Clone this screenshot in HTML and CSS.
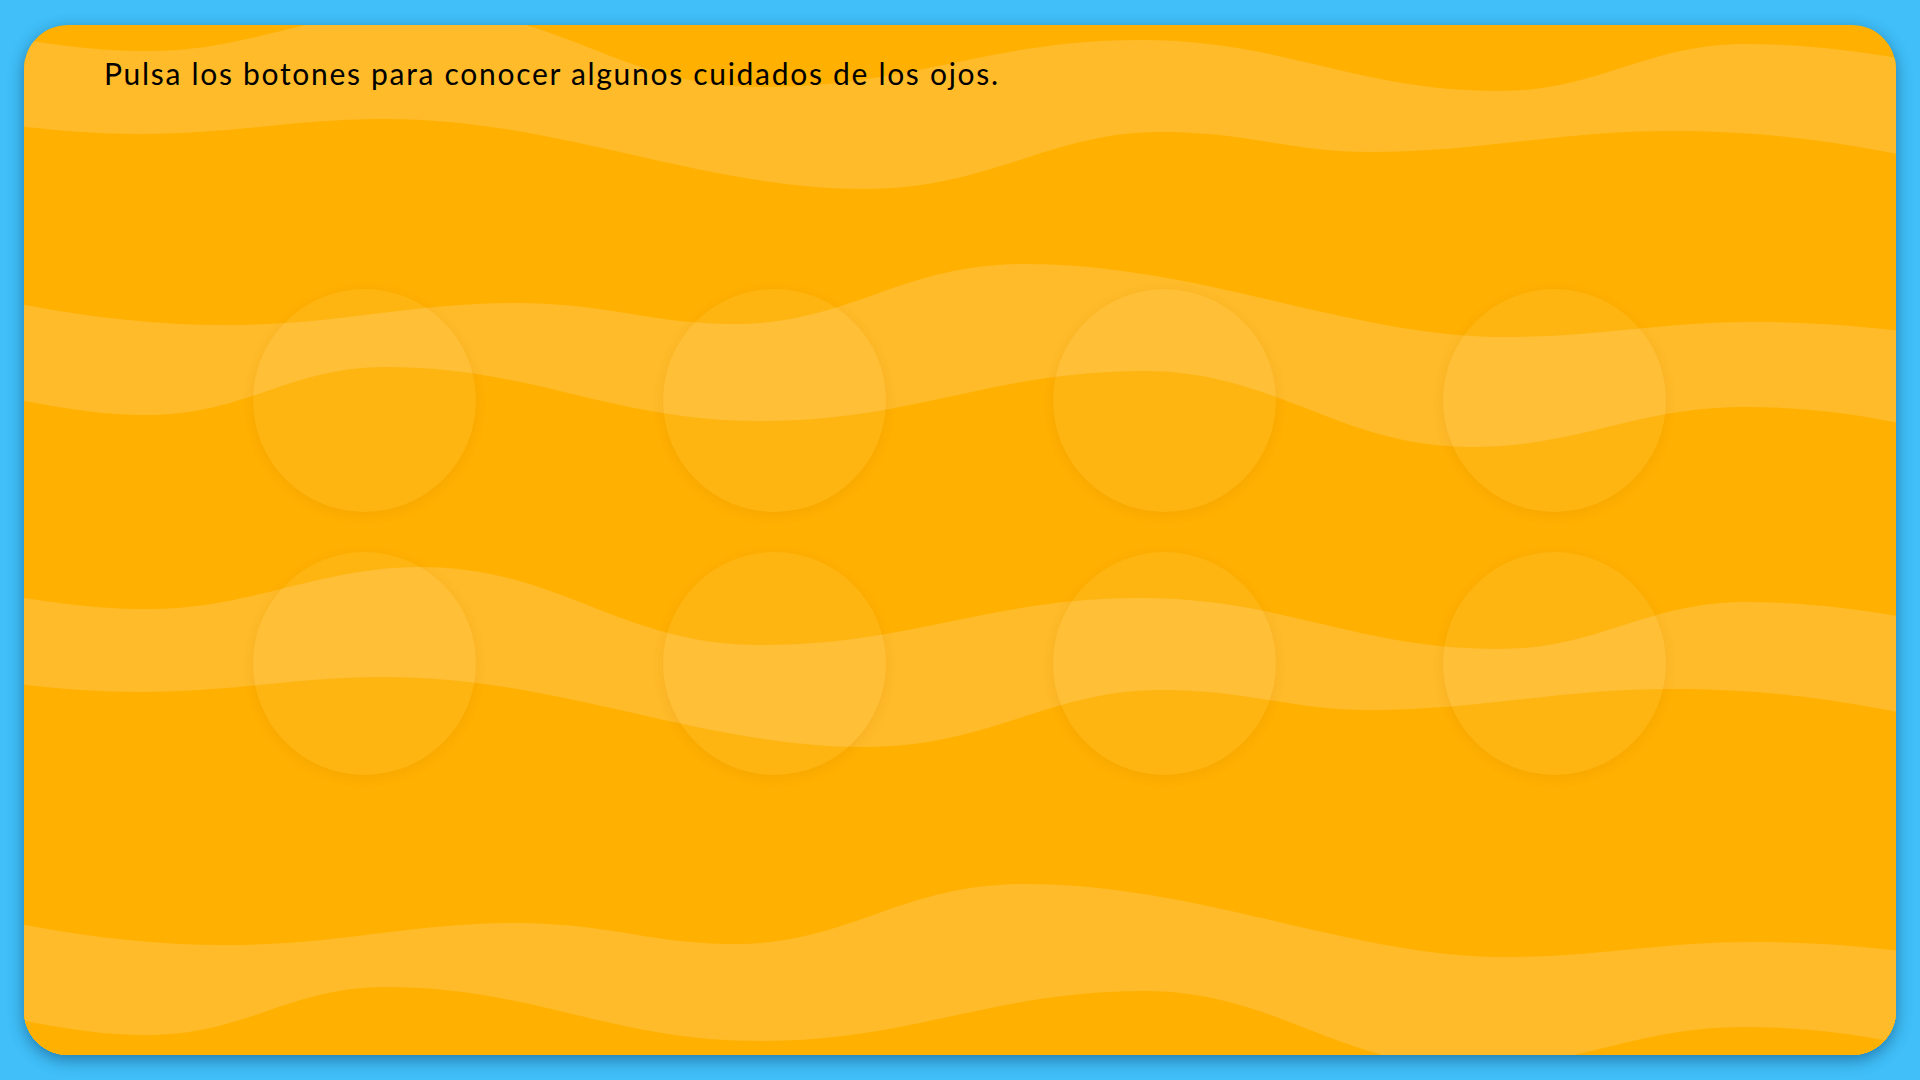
FILE: index.html
```html
<!DOCTYPE html>
<html lang="es">
<head>
<meta charset="utf-8">
<title>Cuidados de los ojos</title>
<link rel="stylesheet" href="styles.css">
</head>
<body>
<main class="card">
  <svg class="waves" viewBox="24 25 1872 1030" preserveAspectRatio="none" aria-hidden="true">
    <g>
      <path class="light" d="M 0,36 C 60,46 100,51 150,51 C 250,51 320,9 420,9 C 560,9 620,87 760,87 C 912,87 988,40 1140,40 C 1284,40 1356,91 1500,91 C 1598,91 1647,44 1745,44 C 1815,44 1880,54 1930,64 L 1930,1100 L 0,1100 Z"/>
      <path class="base" d="M 0,124 C 50,130 90,134 140,134 C 240,134 290,119 385,119 C 560,119 700,189 865,189 C 990,189 1050,132 1160,132 C 1250,132 1290,152 1370,152 C 1480,152 1560,131 1670,131 C 1780,131 1850,145 1930,160 L 1930,1100 L 0,1100 Z"/>
    </g>
    <g>
      <path class="light" d="M 0,300 C 80,316 150,325 225,325 C 340,325 410,303 514,303 C 610,303 650,324 735,324 C 850,324 900,264 1025,264 C 1200,264 1350,337 1506,337 C 1600,337 1660,322 1751,322 C 1830,322 1880,329 1930,334 L 1930,1100 L 0,1100 Z"/>
      <path class="base" d="M 0,396 C 60,408 100,415 147,415 C 245,415 290,367 385,367 C 535,367 610,421 760,421 C 915,421 990,371 1145,371 C 1275,371 1340,447 1470,447 C 1580,447 1635,407 1745,407 C 1820,407 1880,418 1930,430 L 1930,1100 L 0,1100 Z"/>
    </g>
    <g transform="translate(0,558)">
      <path class="light" d="M 0,36 C 60,46 100,51 150,51 C 250,51 320,9 420,9 C 560,9 620,87 760,87 C 912,87 988,40 1140,40 C 1284,40 1356,91 1500,91 C 1598,91 1647,44 1745,44 C 1815,44 1880,54 1930,64 L 1930,1100 L 0,1100 Z"/>
      <path class="base" d="M 0,124 C 50,130 90,134 140,134 C 240,134 290,119 385,119 C 560,119 700,189 865,189 C 990,189 1050,132 1160,132 C 1250,132 1290,152 1370,152 C 1480,152 1560,131 1670,131 C 1780,131 1850,145 1930,160 L 1930,1100 L 0,1100 Z"/>
    </g>
    <g transform="translate(0,620)">
      <path class="light" d="M 0,300 C 80,316 150,325 225,325 C 340,325 410,303 514,303 C 610,303 650,324 735,324 C 850,324 900,264 1025,264 C 1200,264 1350,337 1506,337 C 1600,337 1660,322 1751,322 C 1830,322 1880,329 1930,334 L 1930,1100 L 0,1100 Z"/>
      <path class="base" d="M 0,396 C 60,408 100,415 147,415 C 245,415 290,367 385,367 C 535,367 610,421 760,421 C 915,421 990,371 1145,371 C 1275,371 1340,447 1470,447 C 1580,447 1635,407 1745,407 C 1820,407 1880,418 1930,430 L 1930,1100 L 0,1100 Z"/>
    </g>
  </svg>
  <p class="instr">Pulsa los botones para conocer algunos cuidados de los ojos.</p>
  <div class="buttons">
    <button class="btn" aria-label="Cuidado 1"></button>
    <button class="btn" aria-label="Cuidado 2"></button>
    <button class="btn" aria-label="Cuidado 3"></button>
    <button class="btn" aria-label="Cuidado 4"></button>
    <button class="btn" aria-label="Cuidado 5"></button>
    <button class="btn" aria-label="Cuidado 6"></button>
    <button class="btn" aria-label="Cuidado 7"></button>
    <button class="btn" aria-label="Cuidado 8"></button>
  </div>
</main>
</body>
</html>
```
FILE: styles.css
```css
html, body {
  margin: 0;
  padding: 0;
}
body {
  width: 1920px;
  height: 1080px;
  background: #40bff8;
  overflow: hidden;
  padding: 25px 24px;
  box-sizing: border-box;
}
.card {
  position: relative;
  width: 1872px;
  height: 1030px;
  border-radius: 44px;
  overflow: hidden;
  background: #ffb000;
  box-shadow: 0 5px 16px rgba(0, 40, 80, 0.45);
  display: flex;
  flex-direction: column;
}
.waves {
  position: absolute;
  left: 0;
  top: 0;
  width: 1872px;
  height: 1030px;
}
.waves .light {
  fill: #ffbb29;
}
.waves .base {
  fill: #ffb000;
}
.instr {
  position: relative;
  margin: 0;
  padding: 30px 0 0 80px;
  font-family: Lato, "Open Sans", sans-serif;
  font-size: 30px;
  line-height: 36px;
  letter-spacing: 1.7px;
  color: #000;
}
.buttons {
  position: relative;
  margin: 198px 0 0 229px;
  display: grid;
  grid-template-columns: 243px 223px 223px 223px;
  grid-auto-rows: 223px;
  column-gap: 167px;
  row-gap: 40px;
}
.btn {
  width: 223px;
  height: 223px;
  padding: 0;
  border: none;
  border-radius: 50%;
  background: rgba(255, 255, 255, 0.065);
  box-shadow: 0 3px 12px rgba(170, 90, 0, 0.11);
  cursor: pointer;
}
```
